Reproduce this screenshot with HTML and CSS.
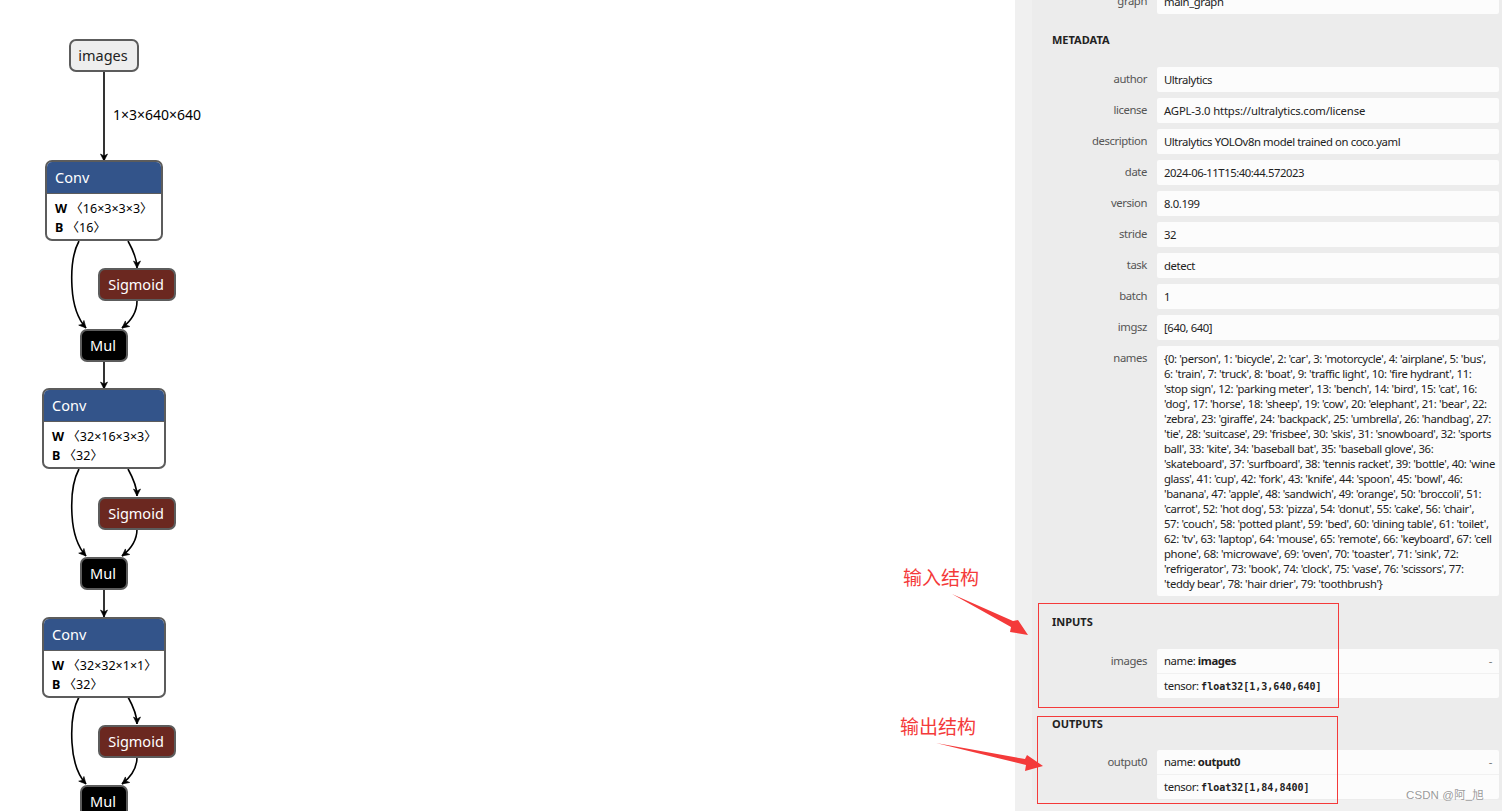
FILE: index.html
```html
<!DOCTYPE html>
<html lang="en">
<head>
  <meta charset="UTF-8" />
  <title>Model properties</title>
  <link rel="stylesheet" href="styles.css">
</head>
<body>
  <div class="graph">
    <svg class="edges" width="1000" height="811" viewBox="0 0 1000 811">
      <defs>
        <marker id="head" markerWidth="10" markerHeight="10" refX="8" refY="4.5" orient="auto" markerUnits="userSpaceOnUse">
          <path d="M1 1 L8 4.5 L1 8 L3 4.5 Z" fill="#000" stroke="#000" stroke-width="0.6" />
        </marker>
        <g id="block">
          <path d="M79 241 C72 254 71 270 72 287 C73 305 77 318 86 328" marker-end="url(#head)" />
          <path d="M128 241 C133 250 137 258 137 268" marker-end="url(#head)" />
          <path d="M137 301 C137 312 131 321 122 328" marker-end="url(#head)" />
          <path d="M104 361 L104 389" marker-end="url(#head)" />
        </g>
      </defs>
      <g fill="none" stroke="#000" stroke-width="1.6">
        <path d="M104 71 L104 161" marker-end="url(#head)" />
        <use href="#block" />
        <use href="#block" y="228" />
        <use href="#block" y="456" />
      </g>
    </svg>
    <span class="edge-label">1×3×640×640</span>

    <div class="node node-input images-node">images</div>

    <div class="node conv conv-1">
      <div class="conv-title">Conv</div>
      <div class="conv-body"><div><b>W</b> 〈16×3×3×3〉</div><div><b>B</b> 〈16〉</div></div>
    </div>
    <div class="node sigmoid sigmoid-1">Sigmoid</div>
    <div class="node mul mul-1">Mul</div>

    <div class="node conv conv-wide conv-2">
      <div class="conv-title">Conv</div>
      <div class="conv-body"><div><b>W</b> 〈32×16×3×3〉</div><div><b>B</b> 〈32〉</div></div>
    </div>
    <div class="node sigmoid sigmoid-2">Sigmoid</div>
    <div class="node mul mul-2">Mul</div>

    <div class="node conv conv-wide conv-3">
      <div class="conv-title">Conv</div>
      <div class="conv-body"><div><b>W</b> 〈32×32×1×1〉</div><div><b>B</b> 〈32〉</div></div>
    </div>
    <div class="node sigmoid sigmoid-3">Sigmoid</div>
    <div class="node mul mul-3">Mul</div>
  </div>

  <aside class="sidebar">
    <div class="panel">
      <div class="row row-cut"><div class="label">graph</div><div class="value">main_graph</div></div>

      <h2 class="section-title">METADATA</h2>
      <div class="row"><div class="label">author</div><div class="value">Ultralytics</div></div>
      <div class="row"><div class="label">license</div><div class="value value-loose">AGPL-3.0 https://ultralytics.com/license</div></div>
      <div class="row"><div class="label">description</div><div class="value">Ultralytics YOLOv8n model trained on coco.yaml</div></div>
      <div class="row"><div class="label">date</div><div class="value value-digits">2024-06-11T15:40:44.572023</div></div>
      <div class="row"><div class="label">version</div><div class="value">8.0.199</div></div>
      <div class="row"><div class="label">stride</div><div class="value">32</div></div>
      <div class="row"><div class="label">task</div><div class="value">detect</div></div>
      <div class="row"><div class="label">batch</div><div class="value">1</div></div>
      <div class="row"><div class="label">imgsz</div><div class="value">[640, 640]</div></div>
      <div class="row">
        <div class="label">names</div>
        <div class="value value-names">{0: 'person', 1: 'bicycle', 2: 'car', 3: 'motorcycle', 4: 'airplane', 5: 'bus',<br>6: 'train', 7: 'truck', 8: 'boat', 9: 'traffic light', 10: 'fire hydrant', 11:<br>'stop sign', 12: 'parking meter', 13: 'bench', 14: 'bird', 15: 'cat', 16:<br>'dog', 17: 'horse', 18: 'sheep', 19: 'cow', 20: 'elephant', 21: 'bear', 22:<br>'zebra', 23: 'giraffe', 24: 'backpack', 25: 'umbrella', 26: 'handbag', 27:<br>'tie', 28: 'suitcase', 29: 'frisbee', 30: 'skis', 31: 'snowboard', 32: 'sports<br>ball', 33: 'kite', 34: 'baseball bat', 35: 'baseball glove', 36:<br>'skateboard', 37: 'surfboard', 38: 'tennis racket', 39: 'bottle', 40: 'wine<br>glass', 41: 'cup', 42: 'fork', 43: 'knife', 44: 'spoon', 45: 'bowl', 46:<br>'banana', 47: 'apple', 48: 'sandwich', 49: 'orange', 50: 'broccoli', 51:<br>'carrot', 52: 'hot dog', 53: 'pizza', 54: 'donut', 55: 'cake', 56: 'chair',<br>57: 'couch', 58: 'potted plant', 59: 'bed', 60: 'dining table', 61: 'toilet',<br>62: 'tv', 63: 'laptop', 64: 'mouse', 65: 'remote', 66: 'keyboard', 67: 'cell<br>phone', 68: 'microwave', 69: 'oven', 70: 'toaster', 71: 'sink', 72:<br>'refrigerator', 73: 'book', 74: 'clock', 75: 'vase', 76: 'scissors', 77:<br>'teddy bear', 78: 'hair drier', 79: 'toothbrush'}</div>
      </div>

      <h2 class="section-title">INPUTS</h2>
      <div class="row">
        <div class="label">images</div>
        <div class="value value-split">
          <div class="line line-name"><span>name: <b>images</b></span><span class="expander">-</span></div>
          <div class="line">tensor: <code>float32[1,3,640,640]</code></div>
        </div>
      </div>

      <h2 class="section-title section-tight">OUTPUTS</h2>
      <div class="row">
        <div class="label">output0</div>
        <div class="value value-split">
          <div class="line line-name"><span>name: <b>output0</b></span><span class="expander">-</span></div>
          <div class="line">tensor: <code>float32[1,84,8400]</code></div>
        </div>
      </div>
    </div>
  </aside>

  <!-- red notes drawn on top of the screenshot -->
  <div class="note-box note-box-in"></div>
  <div class="note-box note-box-out"></div>
  <span class="note-text note-text-in">输入结构</span>
  <span class="note-text note-text-out">输出结构</span>
  <svg class="note-arrows" width="1502" height="811" viewBox="0 0 1502 811">
    <polygon points="952,594 1013,621 1018,620 1028,635 1010,632 1011,627" fill="#f43a3a" />
    <polygon points="936,743 1025,759 1027,755 1043,766 1025,771 1026,765" fill="#f43a3a" />
  </svg>
  <span class="watermark">CSDN @阿_旭</span>
</body>
</html>
```

FILE: styles.css
```css
* {
  margin: 0;
  padding: 0;
  box-sizing: border-box;
}
html, body {
  height: 100%;
  overflow: hidden;
}
body {
  position: relative;
  display: flex;
  justify-content: flex-end;
  background: #fff;
  font-family: "Noto Sans", "Noto Sans CJK SC", sans-serif;
  color: #222;
}

/* graph canvas */
.graph {
  position: absolute;
  left: 0;
  top: 0;
  width: 1000px;
  height: 811px;
}
.edges {
  position: absolute;
  left: 0;
  top: 0;
}
.edge-label {
  position: absolute;
  left: 113px;
  top: 105px;
  font-size: 14px;
  line-height: 20px;
  color: #000;
}
.node {
  position: absolute;
  border: 2px solid #5c5c5c;
  border-radius: 7px;
  font-size: 14.5px;
  overflow: hidden;
}
.node-input, .sigmoid, .mul {
  display: flex;
  align-items: center;
  justify-content: center;
  height: 33px;
  padding: 0 2px 2px 0;
}
.node-input {
  background: #eee;
  color: #222;
}
.images-node {
  left: 69px;
  top: 39px;
  width: 70px;
}
.sigmoid {
  left: 98px;
  width: 78px;
  background: #6b2820;
  color: #fff;
}
.sigmoid-1 { top: 268px; }
.sigmoid-2 { top: 497px; }
.sigmoid-3 { top: 725px; }
.mul {
  left: 80px;
  width: 48px;
  background: #000;
  color: #fff;
}
.mul-1 { top: 329px; }
.mul-2 { top: 557px; }
.mul-3 { top: 785px; }
.conv {
  left: 45px;
  width: 118px;
  height: 81px;
  background: #fff;
}
.conv-wide {
  left: 42px;
  width: 124px;
}
.conv-1 { top: 160px; }
.conv-2 { top: 388px; }
.conv-3 { top: 617px; }
.conv-title {
  height: 32px;
  padding-left: 8px;
  line-height: 31px;
  background: #33548a;
  color: #fff;
  border-bottom: 1px solid #5c5c5c;
}
.conv-body {
  padding: 5px 8px;
  font-size: 12.5px;
  line-height: 19px;
  color: #000;
  white-space: nowrap;
}

/* properties sidebar */
.sidebar {
  width: 487px;
  height: 811px;
  padding-left: 17px;
  background: #f0f0f0;
}
.panel {
  height: 100%;
  padding-right: 3px;
  background: #ececec;
  font-size: 11.3px;
  letter-spacing: -0.4px;
}
.row {
  display: grid;
  grid-template-columns: 115px 342px;
  column-gap: 10px;
  margin-bottom: 6px;
}
.row-cut {
  margin-top: -11px;
}
.label {
  padding-top: 4px;
  line-height: 15px;
  text-align: right;
  color: #555;
}
.value {
  padding: 5px 7px;
  line-height: 15px;
  background: #fcfcfc;
  border-radius: 2px;
  white-space: nowrap;
}
.value-loose {
  letter-spacing: -0.15px;
}
.value-digits {
  letter-spacing: -0.46px;
}
.value-names {
  letter-spacing: -0.37px;
}
.value-split {
  padding: 0;
}
.line {
  padding: 4px 7px 5px;
  line-height: 15px;
}
.line-name {
  display: flex;
  justify-content: space-between;
  border-bottom: 1px solid #f1f1f1;
}
.line-name + .line {
  padding: 4px 7px;
}
.expander {
  color: #777;
}
code {
  font-family: "DejaVu Sans Mono", monospace;
  font-size: 10px;
  font-weight: 700;
  letter-spacing: 0;
}
.section-title {
  padding: 12px 0 19px 20px;
  font-size: 11px;
  line-height: 16px;
  font-weight: 700;
  letter-spacing: 0;
  color: #222;
}
.section-tight {
  padding-bottom: 18px;
}

/* annotations */
.note-box {
  position: absolute;
  border: 1px solid #f43a3a;
}
.note-box-in {
  left: 1038px;
  top: 603px;
  width: 301px;
  height: 105px;
}
.note-box-out {
  left: 1037px;
  top: 716px;
  width: 301px;
  height: 88px;
}
.note-text {
  position: absolute;
  font-family: "Noto Sans CJK SC", sans-serif;
  font-size: 19px;
  line-height: 24px;
  color: #f43a3a;
}
.note-text-in {
  left: 903px;
  top: 565px;
}
.note-text-out {
  left: 900px;
  top: 714px;
}
.note-arrows {
  position: absolute;
  left: 0;
  top: 0;
  pointer-events: none;
}
.watermark {
  position: absolute;
  left: 1406px;
  top: 787px;
  font-family: "Liberation Sans", "Noto Sans CJK SC", sans-serif;
  font-size: 11.5px;
  letter-spacing: 0.1px;
  line-height: 16px;
  color: rgba(120, 120, 120, 0.75);
}
```
